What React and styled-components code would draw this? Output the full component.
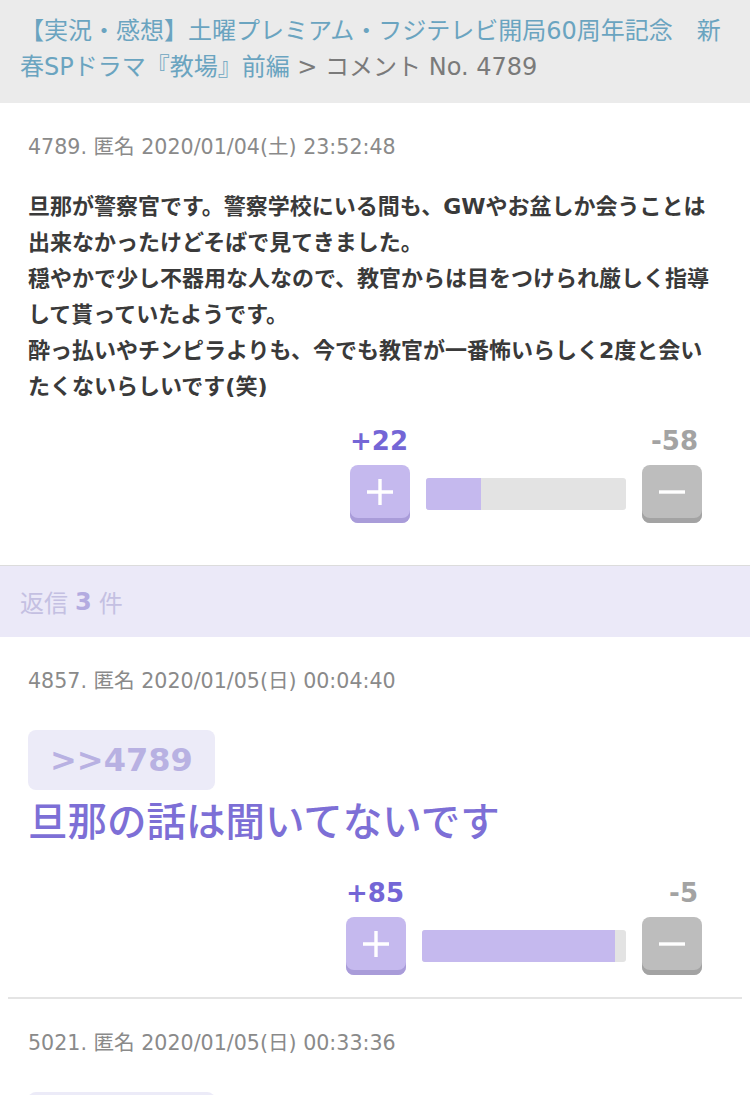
import React from 'react'
import styled, { createGlobalStyle } from 'styled-components'

const GlobalStyle = createGlobalStyle`
  body {
    margin: 0;
    background: #fff;
    font-family: "DejaVu Sans", "Noto Sans CJK JP", sans-serif;
    color: #333;
  }
`
const Breadcrumb = styled.nav`
  padding: 13px 18px 18px 20px;
  background: #ebebeb;
  font-size: 24px;
  line-height: 36px;
  color: #7a7a7a;

  a {
    color: #6aa4c0;
    text-decoration: none;
  }
`
const Post = styled.article`
  padding: 30px 28px ${(props) => props.$bottom}px;
`
const Meta = styled.div`
  font-size: 20.6px;
  line-height: 28px;
  color: #8a8a8a;
`
const Body = styled.p`
  margin: 28px 0 0;
  font-size: 22px;
  line-height: 36px;
  font-weight: 700;
  color: #3a3a3a;
`
const Vote = styled.div`
  width: ${(props) => props.$width}px;
  margin: ${(props) => props.$top}px 20px 0 auto;
`
const Counts = styled.div`
  display: flex;
  justify-content: space-between;
  padding-right: 4px;
  font-size: 26px;
  line-height: 30px;
  font-weight: 700;
`
const Good = styled.span`
  color: #7466d6;
`
const Bad = styled.span`
  color: #a3a3a3;
`
const Controls = styled.div`
  display: flex;
  align-items: center;
  gap: 16px;
  margin-top: 9px;
`
const VoteButton = styled.button`
  display: flex;
  align-items: center;
  justify-content: center;
  flex: none;
  width: 60px;
  height: 58px;
  padding: 0 0 5px;
  border: none;
  border-radius: 8px;
  background: ${(props) => (props.$plus ? '#c5b9ee' : '#bdbdbd')};
  box-shadow: inset 0 -5px 0 ${(props) => (props.$plus ? '#a99cd9' : '#a3a3a3')};
  cursor: pointer;
`
const Bar = styled.div`
  flex: 1;
  height: 32px;
  border-radius: 3px;
  background: #e3e3e3;
  overflow: hidden;
`
const Fill = styled.div`
  height: 100%;
  background: #c5b9ee;
`
const ReplyHeader = styled.div`
  padding: 0 20px;
  height: 71px;
  display: flex;
  align-items: center;
  border-top: 1px solid #dcdcdc;
  background: #ebe9f8;
  font-size: 24px;
  color: #c4c0e2;

  b {
    margin: 0 7px;
    color: #b3abe0;
  }
`
const Anchor = styled.div`
  display: inline-block;
  margin-top: 35px;
  padding: 0 22px;
  height: 60px;
  line-height: 60px;
  border-radius: 8px;
  background: #ecebf8;
  font-size: 32px;
  font-weight: 700;
  color: #b8b1e2;
`
const ReplyText = styled.p`
  margin: 7px 0 0;
  font-size: 39.5px;
  line-height: 50px;
  font-weight: 500;
  color: #7d6fd6;
`
const Divider = styled.hr`
  margin: 0 8px;
  border: none;
  border-top: 2px solid #e4e4e4;
`

function PlusIcon() {
  return (
    <svg width='30' height='30' viewBox='0 0 30 30'>
      <path d='M15 2V28M2 15H28' stroke='#fff' strokeWidth='3.4' />
    </svg>
  )
}

function MinusIcon() {
  return (
    <svg width='30' height='30' viewBox='0 0 30 30'>
      <path d='M2 15H28' stroke='#fff' strokeWidth='3.4' />
    </svg>
  )
}

function VoteBox({ good, bad, width, top }) {
  const ratio = (good / (good + bad)) * 100
  return (
    <Vote $width={width} $top={top}>
      <Counts>
        <Good>+{good}</Good>
        <Bad>-{bad}</Bad>
      </Counts>
      <Controls>
        <VoteButton $plus aria-label='plus'>
          <PlusIcon />
        </VoteButton>
        <Bar>
          <Fill style={{ width: `${ratio}%` }} />
        </Bar>
        <VoteButton aria-label='minus'>
          <MinusIcon />
        </VoteButton>
      </Controls>
    </Vote>
  )
}

export default function App() {
  return (
    <>
      <GlobalStyle />
      <Breadcrumb>
        <a href='#'>
          【実況・感想】土曜プレミアム・フジテレビ開局60周年記念　新春SPドラマ『教場』前編
        </a>{' '}
        &gt; コメント No. 4789
      </Breadcrumb>

      <Post $bottom={42}>
        <Meta>4789. 匿名 2020/01/04(土) 23:52:48</Meta>
        <Body>
          旦那が警察官です。警察学校にいる間も、GWやお盆しか会うことは出来なかったけどそばで見てきました。
          <br />
          穏やかで少し不器用な人なので、教官からは目をつけられ厳しく指導して貰っていたようです。
          <br />
          酔っ払いやチンピラよりも、今でも教官が一番怖いらしく2度と会いたくないらしいです(笑)
        </Body>
        <VoteBox good={22} bad={58} width={352} top={21} />
      </Post>

      <ReplyHeader>
        返信<b>3</b>件
      </ReplyHeader>

      <Post $bottom={22}>
        <Meta>4857. 匿名 2020/01/05(日) 00:04:40</Meta>
        <Anchor>&gt;&gt;4789</Anchor>
        <ReplyText>旦那の話は聞いてないです</ReplyText>
        <VoteBox good={85} bad={5} width={356} top={31} />
      </Post>
      <Divider />

      <Post $bottom={22}>
        <Meta>5021. 匿名 2020/01/05(日) 00:33:36</Meta>
        <Anchor>&gt;&gt;4857</Anchor>
      </Post>
    </>
  )
}
